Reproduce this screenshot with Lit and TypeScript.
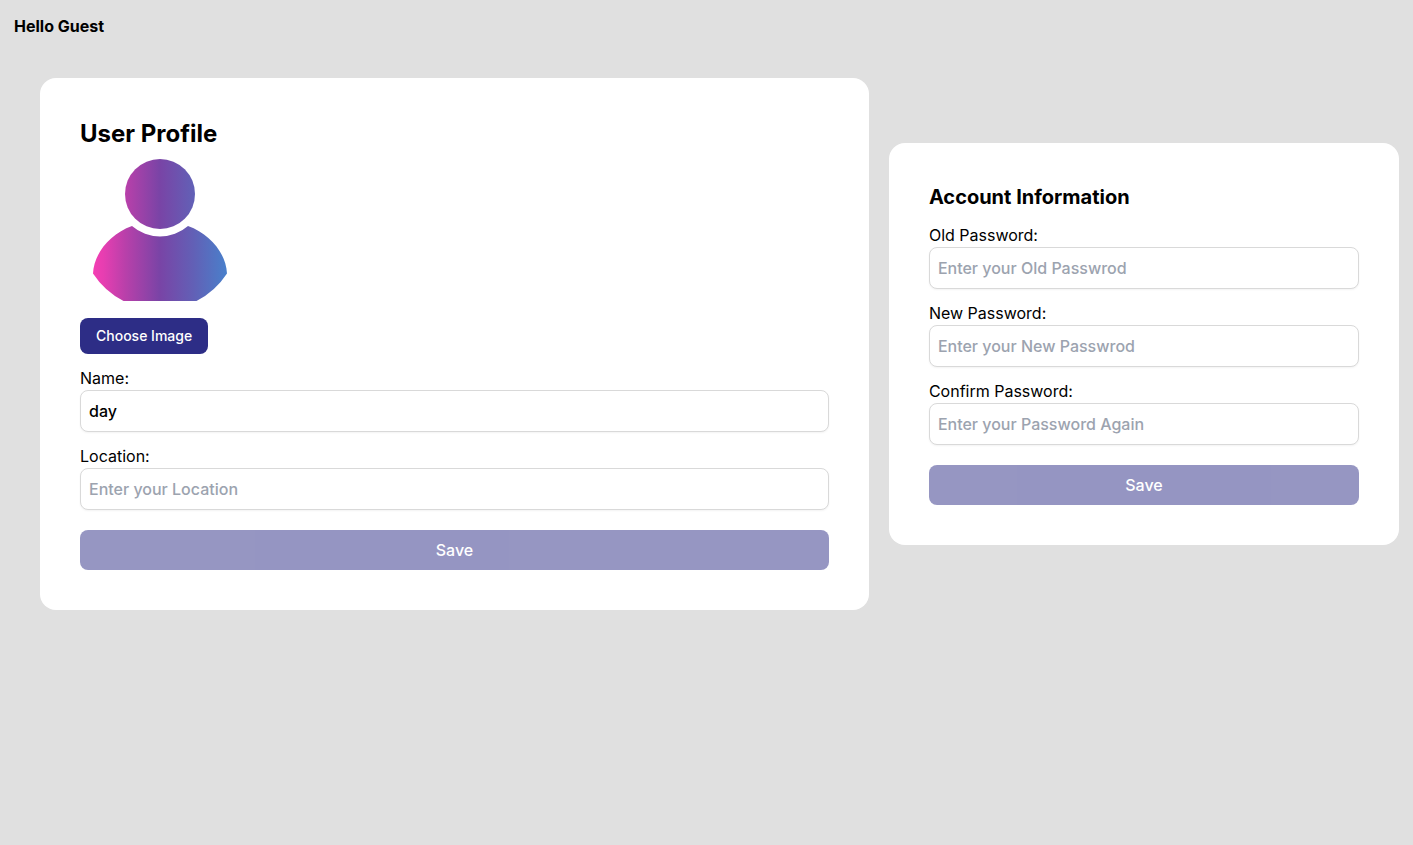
import { LitElement, html, css } from "lit";
import { customElement, property } from "lit/decorators.js";

@customElement("profile-avatar")
class ProfileAvatar extends LitElement {
  static styles = css`
    :host {
      display: block;
    }
    .avatar {
      display: block;
      width: 160px;
      height: 160px;
    }
  `;

  render() {
    return html`
      <svg class="avatar" viewBox="0 0 160 160" role="img" aria-label="Profile picture">
        <defs>
          <linearGradient id="tint" gradientUnits="userSpaceOnUse" x1="13" y1="0" x2="147" y2="0">
            <stop offset="0" stop-color="#f43eb3" />
            <stop offset="0.08" stop-color="#e63eb1" />
            <stop offset="0.24" stop-color="#b940aa" />
            <stop offset="0.5" stop-color="#7944a6" />
            <stop offset="0.75" stop-color="#6260b6" />
            <stop offset="1" stop-color="#4980cb" />
          </linearGradient>
        </defs>
        <circle cx="80" cy="44" r="35" fill="url(#tint)" />
        <path
          d="M52 76 A42.5 42.5 0 0 0 108 76 C130 84 146 103 147 123.500 A80 80 0 0 1 116.500 151 H43.500 A80 80 0 0 1 13 123.500 C14 103 30 84 52 76 Z"
          fill="url(#tint)"
        />
      </svg>
    `;
  }
}

@customElement("text-field")
class TextField extends LitElement {
  @property() label = "";
  @property() type = "text";
  @property() value = "";
  @property() placeholder = "";

  static styles = css`
    :host {
      display: block;
    }
    .label {
      display: block;
      line-height: 24px;
    }
    .input {
      display: block;
      box-sizing: border-box;
      width: 100%;
      padding: 8px;
      border: 1px solid #d9d9d9;
      border-radius: 8px;
      background: #fff;
      box-shadow: 0 1px 2px rgba(0, 0, 0, 0.05);
      color: #000;
      font: inherit;
      font-weight: 500;
      line-height: 24px;
      height: 42px;
      outline: none;
    }
    .input:focus-visible {
      border-color: #2d2d86;
    }
    .input::placeholder {
      color: #9ca3af;
      opacity: 1;
    }
  `;

  render() {
    return html`
      <label class="label" for="field">${this.label}</label>
      <input
        class="input"
        id="field"
        type=${this.type}
        .value=${this.value}
        placeholder=${this.placeholder}
      />
    `;
  }
}

@customElement("app-root")
class AppRoot extends LitElement {
  static styles = css`
    :host {
      display: block;
      box-sizing: border-box;
      min-height: 100vh;
      background: #e0e0e0;
      color: #000;
      font-family: Inter, "Liberation Sans", sans-serif;
      font-size: 16px;
      line-height: 24px;
    }
    .header {
      padding: 14px;
      font-weight: 700;
    }
    .content {
      display: grid;
      grid-template-columns: 13fr 8fr;
      align-items: center;
      gap: 20px;
      padding: 26px 14px 40px 40px;
    }
    .card {
      display: flex;
      flex-direction: column;
      gap: 12px;
      padding: 40px;
      border-radius: 16px;
      background: #fff;
    }
    .title {
      margin: 0;
      font-size: 24px;
      line-height: 32px;
      font-weight: 700;
    }
    .subtitle {
      margin: 0;
      font-size: 20px;
      line-height: 28px;
      font-weight: 700;
    }
    .button {
      border: 0;
      border-radius: 8px;
      background: #2d2d86;
      color: #fff;
      font: inherit;
      font-weight: 500;
      cursor: pointer;
    }
    .choose {
      margin-top: 8px;
      padding: 8px 16px;
      font-size: 14px;
      line-height: 20px;
    }
    .save {
      margin-top: 8px;
      padding: 8px 16px;
      line-height: 24px;
    }
    .save:disabled {
      opacity: 0.5;
      cursor: default;
    }
    @media (max-width: 800px) {
      .content {
        grid-template-columns: 1fr;
        padding: 14px;
      }
    }
  `;

  render() {
    return html`
      <header class="header">Hello Guest</header>
      <main class="content">
        <form class="card">
          <div>
            <h1 class="title">User Profile</h1>
            <profile-avatar></profile-avatar>
            <button class="button choose" type="button">Choose Image</button>
          </div>
          <text-field label="Name:" value="day" placeholder="Enter your Name"></text-field>
          <text-field label="Location:" placeholder="Enter your Location"></text-field>
          <button class="button save" type="submit" disabled>Save</button>
        </form>
        <form class="card">
          <h2 class="subtitle">Account Information</h2>
          <text-field label="Old Password:" type="password" placeholder="Enter your Old Passwrod"></text-field>
          <text-field label="New Password:" type="password" placeholder="Enter your New Passwrod"></text-field>
          <text-field label="Confirm Password:" type="password" placeholder="Enter your Password Again"></text-field>
          <button class="button save" type="submit" disabled>Save</button>
        </form>
      </main>
    `;
  }
}
